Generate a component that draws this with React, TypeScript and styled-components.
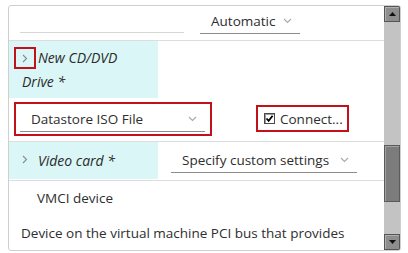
import React from 'react';
import styled, { createGlobalStyle } from 'styled-components';

const GlobalStyle = createGlobalStyle`
  body {
    margin: 0;
    background: #ffffff;
    font-family: 'Open Sans', 'Liberation Sans', sans-serif;
    color: #333333;
  }
`;

const Page = styled.div`
  width: 408px;
  height: 253px;
  padding: 5px 0 0 8px;
  box-sizing: border-box;
  overflow: hidden;
`;

const Panel = styled.div`
  width: 393px;
  height: 246px;
  box-sizing: border-box;
  border: 1px solid #cfcfcf;
  border-radius: 3px;
  display: flex;
  overflow: hidden;
`;

const Content = styled.div`
  flex: 1;
  display: flex;
  flex-direction: column;
  overflow: hidden;
`;

const Row = styled.div`
  display: flex;
  align-items: stretch;
  border-bottom: 1px solid #dddddd;
`;

const TopRow = styled(Row)`
  height: 35px;
  flex-shrink: 0;
  align-items: flex-end;
  padding: 0 0 6px 11px;
  box-sizing: border-box;
`;

const GhostLine = styled.div`
  width: 164px;
  border-bottom: 1px solid #d6d6d6;
  margin-bottom: 1px;
`;

const LabelCell = styled.div`
  width: 149px;
  flex-shrink: 0;
  background: #daf6f6;
  box-sizing: border-box;
  font-style: italic;
  font-size: 14px;
  line-height: 24px;
  color: #2b2b2b;
`;

const DriveLabel = styled(LabelCell)`
  height: 57px;
  padding: 5px 8px 0 13px;
  text-indent: -8px;
`;

const VideoLabel = styled(LabelCell)`
  height: 37px;
  display: flex;
  align-items: center;
  padding-left: 5px;
`;

const Chevron = styled.span<{ $boxed?: boolean }>`
  display: inline-flex;
  align-items: center;
  justify-content: center;
  width: 22px;
  height: 22px;
  box-sizing: border-box;
  vertical-align: middle;
  text-indent: 0;
  margin-right: 2px;
  border: 2px solid ${p => (p.$boxed ? '#c1121c' : 'transparent')};
  position: relative;
  top: -1px;
`;

const ValueCell = styled.div`
  flex: 1;
  display: flex;
  align-items: center;
`;

const Select = styled.div<{ $width: number; $ml?: number }>`
  width: ${p => p.$width}px;
  margin-left: ${p => p.$ml ?? 0}px;
  box-sizing: border-box;
  border-bottom: 1px solid #8c8c8c;
  padding: 0 8px 2px 11px;
  display: flex;
  align-items: center;
  justify-content: space-between;
  font-size: 13.5px;
  line-height: 20px;
  color: #2e2e2e;
`;

const DriveBlock = styled.div`
  display: flex;
  flex-direction: column;
  flex-shrink: 0;
  border-bottom: 1px solid #dddddd;
`;

const DriveHead = styled.div`
  display: flex;
`;

const SubRow = styled.div`
  height: 43px;
  display: flex;
  align-items: flex-start;
  padding: 4px 0 0 5px;
  box-sizing: border-box;
`;

const RedBox = styled.div`
  border: 2px solid #c1121c;
  box-sizing: border-box;
  display: flex;
  align-items: center;
`;

const SourceBox = styled(RedBox)`
  width: 198px;
  height: 34px;
  padding: 0 5px 2px 4px;
  align-items: flex-end;
`;

const ConnectBox = styled(RedBox)`
  width: 93px;
  height: 27px;
  margin: 3px 0 0 44px;
  padding-left: 6px;
  gap: 5px;
  font-size: 13.5px;
  color: #2e2e2e;
`;

const CheckBox = styled.span`
  width: 11px;
  height: 11px;
  box-sizing: border-box;
  border: 1px solid #4a4a4a;
  background: #ffffff;
  box-shadow: inset 1px 1px 0 #9a9a9a;
  display: inline-flex;
  align-items: center;
  justify-content: center;
`;

const VideoRow = styled(Row)`
  height: 38px;
  flex-shrink: 0;
`;

const PlainRow = styled.div<{ $indent: number; $height: number }>`
  height: ${p => p.$height}px;
  flex-shrink: 0;
  display: flex;
  align-items: center;
  padding-left: ${p => p.$indent}px;
  font-size: 13.5px;
  color: #2e2e2e;
  white-space: nowrap;
`;

const Scrollbar = styled.div`
  width: 16px;
  flex-shrink: 0;
  background: #c3c3c3;
  display: flex;
  flex-direction: column;
`;

const ScrollButton = styled.div`
  height: 16px;
  box-sizing: border-box;
  border: 1px solid #555555;
  background: #8e8e8e;
  box-shadow: inset 1px 1px 0 #b0b0b0;
  display: flex;
  align-items: center;
  justify-content: center;
`;

const Track = styled.div`
  flex: 1;
  display: flex;
  flex-direction: column;
  padding-top: 123px;
`;

const Thumb = styled.div`
  height: 57px;
  box-sizing: border-box;
  border: 1px solid #5a5a5a;
  background: #7c7c7c;
  box-shadow: inset 1px 1px 0 #a0a0a0;
`;

const SmallChevronRight = () => (
  <svg width="6" height="9" viewBox="0 0 6 9">
    <path d="M1 1 L4.5 4.5 L1 8" fill="none" stroke="#8a8a8a" strokeWidth="1.1" />
  </svg>
);

const SmallChevronDown = () => (
  <svg width="9" height="6" viewBox="0 0 9 6">
    <path d="M1 1 L4.5 4.5 L8 1" fill="none" stroke="#a8a8a8" strokeWidth="1.1" />
  </svg>
);

const Triangle = ({ up }: { up?: boolean }) => (
  <svg width="7" height="4" viewBox="0 0 7 4">
    <path d={up ? 'M0 4 L3.5 0 L7 4 Z' : 'M0 0 L3.5 4 L7 0 Z'} fill="#111" />
  </svg>
);

const Tick = () => (
  <svg width="9" height="9" viewBox="0 0 9 9">
    <path d="M1.5 4.5 L3.6 6.8 L7.6 1.8" fill="none" stroke="#000" strokeWidth="1.8" />
  </svg>
);

export default function App() {
  return (
    <Page>
      <GlobalStyle />
      <Panel>
        <Content>
          <TopRow>
            <GhostLine />
            <Select $width={100} $ml={16}>
              Automatic <SmallChevronDown />
            </Select>
          </TopRow>

          <DriveBlock>
            <DriveHead>
              <DriveLabel>
                <Chevron $boxed>
                  <SmallChevronRight />
                </Chevron>
                New CD/DVD Drive *
              </DriveLabel>
            </DriveHead>
            <SubRow>
              <SourceBox>
                <Select $width={185}>
                  Datastore ISO File <SmallChevronDown />
                </Select>
              </SourceBox>
              <ConnectBox>
                <CheckBox>
                  <Tick />
                </CheckBox>
                Connect...
              </ConnectBox>
            </SubRow>
          </DriveBlock>

          <VideoRow>
            <VideoLabel>
              <Chevron>
                <SmallChevronRight />
              </Chevron>
              Video card *
            </VideoLabel>
            <ValueCell>
              <Select $width={186} $ml={13}>
                Specify custom settings <SmallChevronDown />
              </Select>
            </ValueCell>
          </VideoRow>

          <PlainRow $indent={28} $height={34}>VMCI device</PlainRow>
          <PlainRow $indent={12} $height={36}>
            Device on the virtual machine PCI bus that provides
          </PlainRow>
        </Content>
        <Scrollbar>
          <ScrollButton>
            <Triangle up />
          </ScrollButton>
          <Track>
            <Thumb />
          </Track>
          <ScrollButton>
            <Triangle />
          </ScrollButton>
        </Scrollbar>
      </Panel>
    </Page>
  );
}
